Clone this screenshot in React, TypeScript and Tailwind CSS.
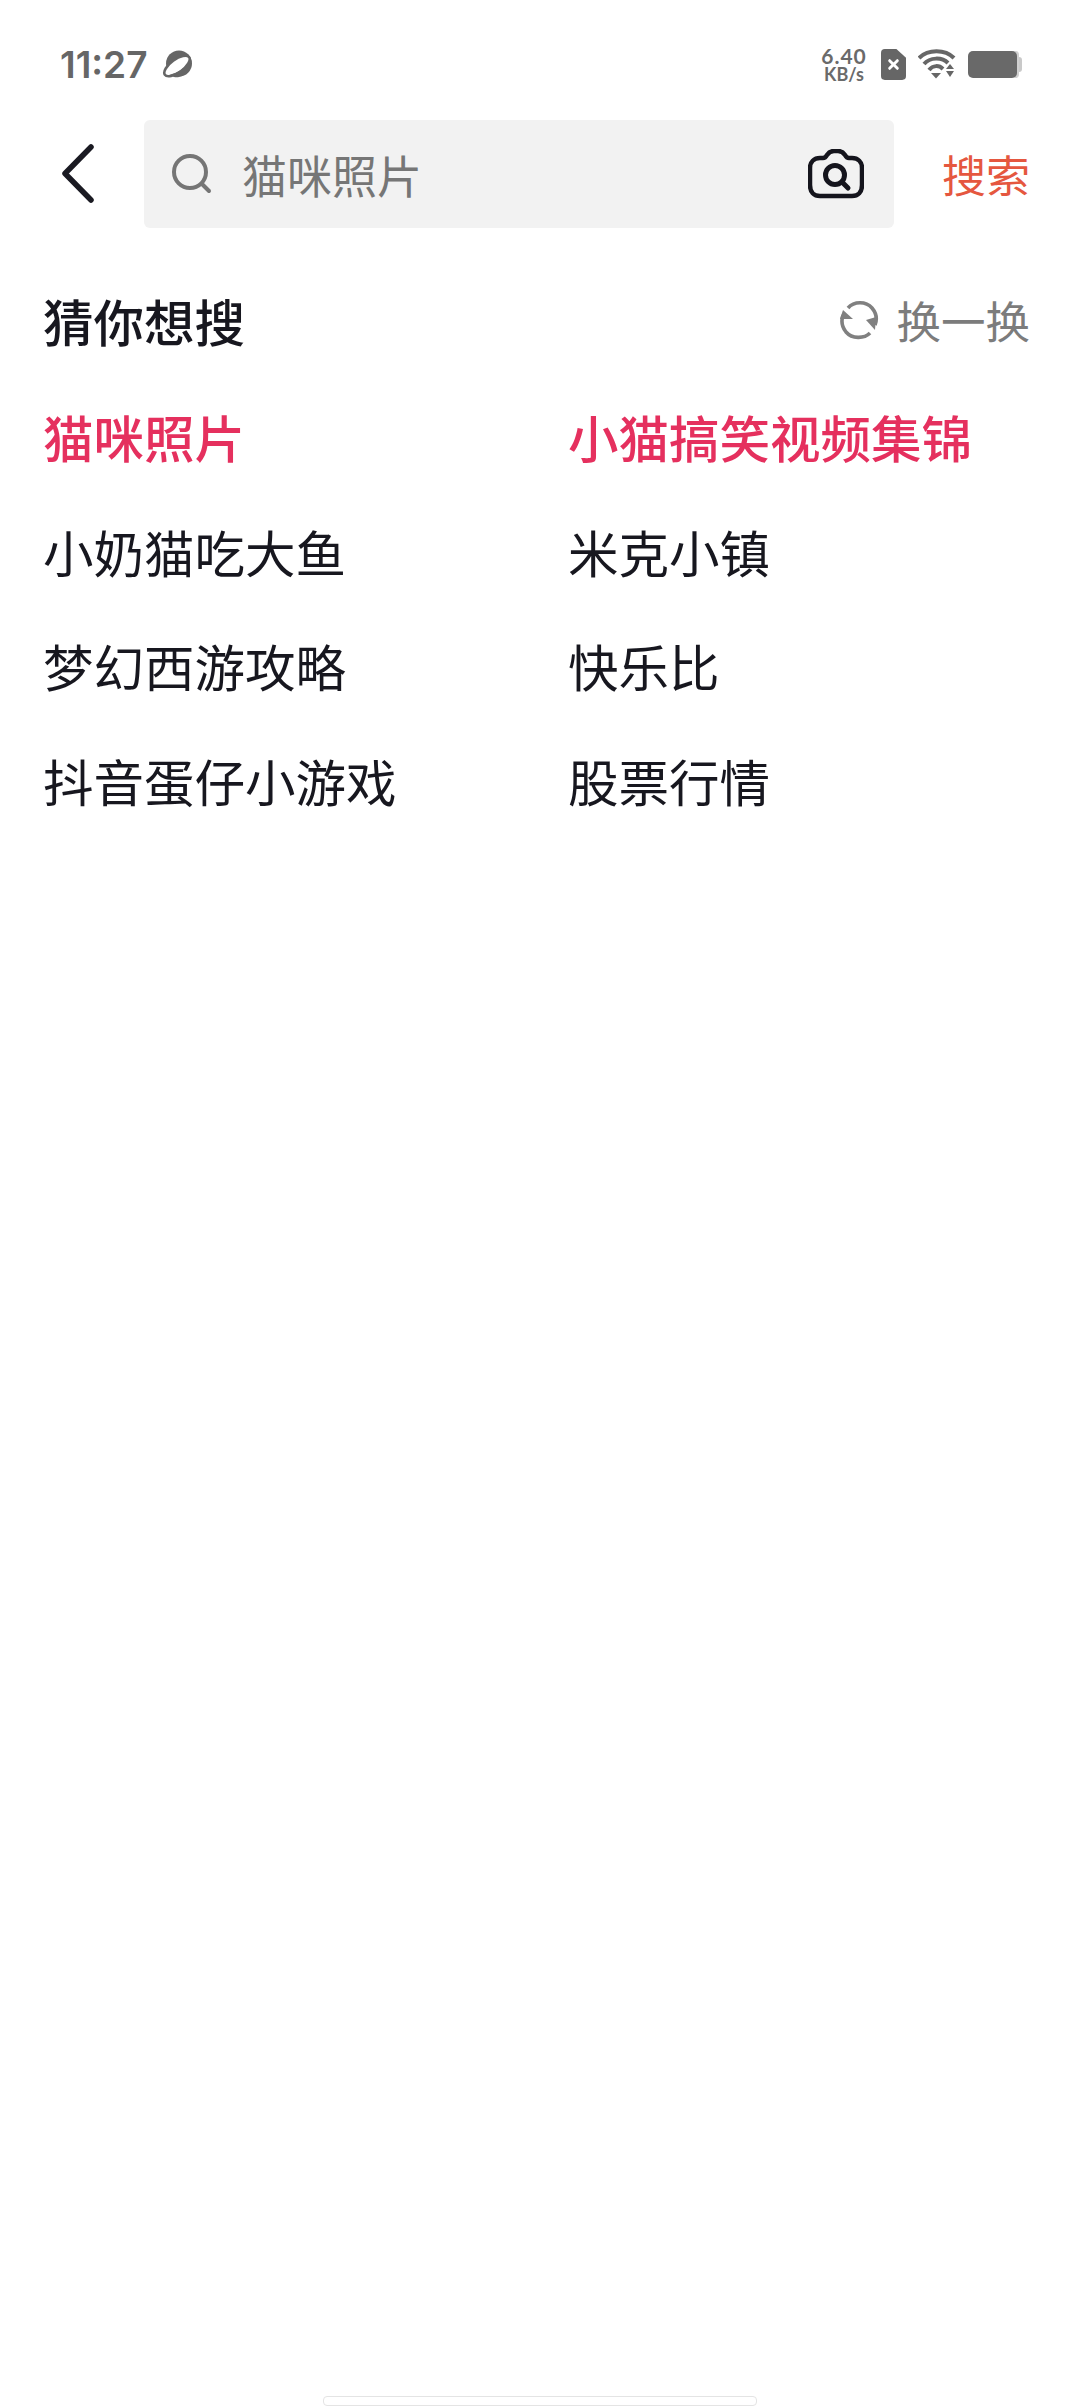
const cjk = "font-['Noto_Sans_CJK_SC','Noto_Sans',sans-serif]";

function Planet() {
  return (
    <svg width="32" height="30" viewBox="0 0 32 30">
      <circle cx="17" cy="14.5" r="13" fill="#666" />
      <ellipse cx="15" cy="17" rx="15" ry="6.5" transform="rotate(-36 15 17)" fill="#fff" stroke="#666" strokeWidth="2.6" />
      <path d="M7 26C15 24 24 19 29 10C31 20 22 30 12 28Z" fill="#666" />
    </svg>
  );
}

function Sim() {
  return (
    <svg width="25" height="31" viewBox="0 0 26 32">
      <path d="M4 0H16L26 9V28A4 4 0 0 1 22 32H4A4 4 0 0 1 0 28V4A4 4 0 0 1 4 0Z" fill="#666" />
      <path d="M9 12L17 20M17 12L9 20" stroke="#fff" strokeWidth="3" strokeLinecap="round" />
    </svg>
  );
}

function Wifi() {
  return (
    <svg width="38" height="30" viewBox="0 0 38 30" fill="none">
      <path d="M1 9C10 0 27 0 36 9" stroke="#666" strokeWidth="4" />
      <path d="M6 15C12 8 24 8 30 14" stroke="#666" strokeWidth="4" />
      <path d="M11 21C15 16 21 16 25 20" stroke="#666" strokeWidth="4" />
      <path d="M13 24H23L18 29.5Z" fill="#666" />
      <path d="M32 15L36 20H28Z" fill="#666" />
      <path d="M28 22H36L32 28Z" fill="#666" />
    </svg>
  );
}

function Battery() {
  return (
    <svg width="54" height="27" viewBox="0 0 54 27">
      <path d="M48 6H51A3 3 0 0 1 54 9V18A3 3 0 0 1 51 21H48Z" fill="#c9c9c9" />
      <rect x="44" y="0" width="7" height="27" rx="4" fill="#d0d0d0" />
      <rect x="0" y="0" width="49" height="27" rx="5" fill="#696969" />
    </svg>
  );
}

function Back() {
  return (
    <svg width="36" height="60" viewBox="0 0 36 60" fill="none">
      <path d="M31 3L5 29.5L31 56" stroke="#1a1a22" strokeWidth="5.5" strokeLinecap="round" strokeLinejoin="round" />
    </svg>
  );
}

function SearchIcon() {
  return (
    <svg width="42" height="42" viewBox="0 0 42 42" fill="none">
      <circle cx="19" cy="19" r="16" stroke="#757575" strokeWidth="4" />
      <path d="M31 31L38 38" stroke="#757575" strokeWidth="4" strokeLinecap="round" />
    </svg>
  );
}

function Camera() {
  return (
    <svg width="56" height="50" viewBox="0 0 56 50" fill="none">
      <path d="M12 9H15C17 9 18 8 19 6C21 3 23 2 26 2H30C33 2 35 3 37 6C38 8 39 9 41 9H44C50 9 54 13 54 19V36C54 43 50 47 44 47H12C6 47 2 43 2 36V19C2 13 6 9 12 9Z" stroke="#15151d" strokeWidth="4.5" />
      <circle cx="27" cy="26" r="9.5" stroke="#15151d" strokeWidth="5" />
      <path d="M34 33L40 39" stroke="#15151d" strokeWidth="5" strokeLinecap="round" />
    </svg>
  );
}

function Refresh() {
  return (
    <svg width="40" height="40" viewBox="0 0 40 40" fill="none">
      <path d="M9 8C15 1 27 1 33 8C38 14 38 20 36 25" stroke="#808080" strokeWidth="3.6" />
      <path d="M31 33C25 39 13 39 7 32C3 27 2 21 4 15" stroke="#808080" strokeWidth="3.6" />
      <path d="M1 19L4 10L14 19Z" fill="#808080" />
      <path d="M27 20L37 17L36 30Z" fill="#808080" />
    </svg>
  );
}

const rows: [string, string, boolean][] = [
  ["猫咪照片", "小猫搞笑视频集锦", true],
  ["小奶猫吃大鱼", "米克小镇", false],
  ["梦幻西游攻略", "快乐比", false],
  ["抖音蛋仔小游戏", "股票行情", false],
];

export default function App() {
  return (
    <div className={`${cjk} relative flex h-[2408px] w-[1080px] flex-col overflow-hidden bg-white`}>
      <div className="flex h-[120px] items-center justify-between pl-[60px] pr-[58px] pt-[8px]">
        <div className="flex items-center gap-[15px]">
          <span className="font-['Inter',sans-serif] text-[37px] font-semibold leading-none text-[#666]">11:27</span>
          <Planet />
        </div>
        <div className="flex items-center gap-[12px]">
          <div className="flex w-[50px] flex-col items-center font-['Lato',sans-serif] font-bold text-[#6a6a6a]">
            <span className="text-[21px] leading-[20px] tracking-[1px]">6.40</span>
            <span className="text-[18px] leading-[16px]">KB/s</span>
          </div>
          <Sim />
          <Wifi />
          <Battery />
        </div>
      </div>

      <div className="flex h-[108px] items-center">
        <div className="flex w-[144px] justify-start pl-[60px]">
          <Back />
        </div>
        <div className="flex h-[108px] w-[750px] items-center rounded-[6px] bg-[#f2f2f2] pl-[27px] pr-[30px]">
          <SearchIcon />
          <span className="ml-[29px] flex-1 text-[45px] leading-none text-[#767676]">猫咪照片</span>
          <Camera />
        </div>
        <span className="ml-[48px] text-[44px] leading-none text-[#e5573f]">搜索</span>
      </div>

      <div className="mt-[52px] flex h-[80px] items-center justify-between pl-[43px] pr-[50px]">
        <span className="text-[50.5px] font-medium leading-none text-[#17171f]">猜你想搜</span>
        <div className="flex items-center gap-[17px]">
          <Refresh />
          <span className="text-[44.5px] leading-none text-[#7c7c7c]">换一换</span>
        </div>
      </div>

      <div className="mt-[19px] grid grid-cols-[525px_1fr] pl-[43px]">
        {rows.map(([a, b, hot]) => (
          <div key={a} className="contents">
            <div className={`flex h-[114.5px] items-center text-[50.5px] leading-none ${hot ? "font-medium text-[#e5305e]" : "text-[#17171f]"}`}>{a}</div>
            <div className={`flex h-[114.5px] items-center text-[50.5px] leading-none ${hot ? "font-medium text-[#e5305e]" : "text-[#17171f]"}`}>{b}</div>
          </div>
        ))}
      </div>

      <div className="absolute bottom-[2px] left-[323px] h-[10px] w-[434px] rounded-[4px] border border-[#e4e4e4] bg-white" />
    </div>
  );
}
